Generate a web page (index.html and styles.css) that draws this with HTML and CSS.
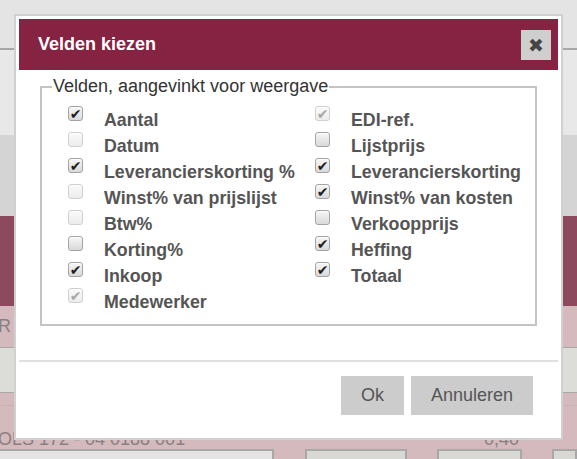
FILE: index.html
```html
<!DOCTYPE html>
<html lang="nl">
<head>
    <meta charset="UTF-8">
    <meta name="viewport" content="width=device-width, initial-scale=1.0">
    <title>Velden kiezen</title>
    <link rel="stylesheet" href="styles.css">
</head>
<body>
    <!-- Pagina achter de dialoog (gedimd) -->
    <div class="page">
        <div class="band band-top"></div>
        <div class="band band-light"></div>
        <div class="band band-grey"></div>
        <div class="band band-wine"></div>
        <div class="band band-pink"><span class="ghost">R</span></div>
        <div class="band band-row"></div>
        <div class="band band-thin"></div>
        <div class="band band-text">
            <span class="ghost">OLS 172 - 04 0188 001</span>
            <span class="ghost ghost-right">0,40</span>
        </div>
        <div class="band band-boxes">
            <div class="box box-wide"></div>
            <div class="box box-a"></div>
            <div class="box box-b"></div>
            <div class="box box-c"></div>
        </div>
    </div>

    <!-- Dialoog -->
    <div class="dialog">
        <div class="dialog-header">
            <h1>Velden kiezen</h1>
            <button class="close" type="button">&#x2716;</button>
        </div>

        <fieldset class="fields">
            <legend>Velden, aangevinkt voor weergave</legend>
            <div class="columns">
                <div class="column">
                    <label class="option"><span class="cb on"></span>Aantal</label>
                    <label class="option"><span class="cb off"></span>Datum</label>
                    <label class="option"><span class="cb on"></span>Leverancierskorting %</label>
                    <label class="option"><span class="cb off"></span>Winst% van prijslijst</label>
                    <label class="option"><span class="cb off"></span>Btw%</label>
                    <label class="option"><span class="cb"></span>Korting%</label>
                    <label class="option"><span class="cb on"></span>Inkoop</label>
                    <label class="option"><span class="cb on off"></span>Medewerker</label>
                </div>
                <div class="column">
                    <label class="option"><span class="cb on off"></span>EDI-ref.</label>
                    <label class="option"><span class="cb"></span>Lijstprijs</label>
                    <label class="option"><span class="cb on"></span>Leverancierskorting</label>
                    <label class="option"><span class="cb on"></span>Winst% van kosten</label>
                    <label class="option"><span class="cb"></span>Verkoopprijs</label>
                    <label class="option"><span class="cb on"></span>Heffing</label>
                    <label class="option"><span class="cb on"></span>Totaal</label>
                </div>
            </div>
        </fieldset>

        <div class="dialog-footer">
            <button type="button" class="btn">Ok</button>
            <button type="button" class="btn">Annuleren</button>
        </div>
    </div>
</body>
</html>
```

FILE: styles.css
```css
body {
    margin: 0;
    width: 577px;
    height: 459px;
    overflow: hidden;
    position: relative;
    font-family: "Liberation Sans", Arial, sans-serif;
    background-color: #d4babd;
}

/* achtergrond */
.page {
    display: flex;
    flex-direction: column;
}

.band-top {
    height: 48px;
    background-color: #e4e4e4;
    border-bottom: 2px solid #a8a8a8;
}

.band-light {
    height: 85px;
    background-color: #e8e8e8;
}

.band-grey {
    height: 81px;
    background-color: #d4d4d4;
}

.band-wine {
    height: 90px;
    background-color: #8d4a5e;
}

.band-pink {
    height: 41px;
    background-color: #d4babd;
    border-bottom: 1px solid #a8a8a8;
    display: flex;
    align-items: center;
}

.band-row {
    height: 44px;
    background-color: #dcdcd8;
    border-bottom: 1px solid #a8a8a8;
}

.band-thin {
    height: 12px;
    background-color: #d4babd;
    border-bottom: 1px solid #c4b4b6;
}

.band-text {
    height: 43px;
    background-color: #d4babd;
    display: flex;
    align-items: flex-end;
    justify-content: space-between;
}

.ghost {
    color: #8a7f80;
    font-size: 18px;
    margin-left: -2px;
}

.band-text .ghost {
    line-height: 20px;
}

.ghost-right {
    margin-right: 58px;
}

.band-boxes {
    display: flex;
    height: 20px;
}

.box {
    border: 2px solid #a8a8a8;
    border-bottom: none;
}

.box-wide {
    width: 272px;
    margin-left: -2px;
    background-color: #e4e4e4;
}

.box-a {
    width: 98px;
    margin-left: 31px;
    background-color: #d8d8d4;
}

.box-b {
    width: 81px;
    margin-left: 30px;
    background-color: #d8d8d4;
}

.box-c {
    flex: 1;
    margin-left: 30px;
    background-color: #d8d8d4;
}

/* dialoog */
.dialog {
    position: absolute;
    left: 14px;
    top: 14px;
    width: 549px;
    height: 426px;
    box-sizing: border-box;
    border: 2px solid #d0d0d0;
    padding: 3px;
    background-color: #fff;
    display: flex;
    flex-direction: column;
}

.dialog-header {
    height: 51px;
    background-color: #862342;
    display: flex;
    align-items: center;
    justify-content: space-between;
    padding: 0 7px 0 19px;
}

.dialog-header h1 {
    margin: 0;
    font-size: 18px;
    font-weight: bold;
    color: #fff;
}

.close {
    width: 30px;
    height: 30px;
    border: none;
    padding: 0;
    background-color: #cfcfcf;
    color: #454545;
    font-family: "DejaVu Sans", sans-serif;
    font-size: 19px;
    line-height: 30px;
    cursor: pointer;
}

.fields {
    margin: 6px 21px 0;
    border: 2px solid #c4c4c4;
    padding: 0 10px 9px;
}

.fields legend {
    padding: 0 1px;
    font-size: 18px;
    color: #333;
}

.columns {
    display: grid;
    grid-template-columns: 247px 1fr;
    margin: 10px 0 0 16px;
}

.option {
    display: flex;
    align-items: flex-start;
    height: 26px;
    line-height: 26px;
    font-size: 17.8px;
    font-weight: bold;
    color: #555;
}

.cb {
    flex: none;
    width: 13px;
    height: 13px;
    margin: -1px 21px 0 0;
    border: 1px solid #a4a4a4;
    border-radius: 3px;
    background: linear-gradient(#f6f6f6, #d9d9d9);
    box-shadow: inset 0 1px 1px rgba(255, 255, 255, 0.8);
    color: #1e1e1e;
    font-family: "DejaVu Sans", sans-serif;
    font-size: 14px;
    line-height: 14px;
    text-align: center;
    font-weight: normal;
}

.cb.off {
    border-color: #d0d0d0;
    background: linear-gradient(#fafafa, #ececec);
    color: #a8a8a8;
}

.cb.on::after {
    content: "\2714";
}

.dialog-footer {
    margin-top: 34px;
    border-top: 2px solid #e0e0e0;
    display: flex;
    justify-content: flex-end;
    gap: 7px;
    padding: 14px 25px 0 0;
}

.btn {
    height: 39px;
    padding: 0 20px;
    border: none;
    background-color: #ccc;
    color: #555;
    font-family: "Liberation Sans", Arial, sans-serif;
    font-size: 18px;
    cursor: pointer;
}
```
